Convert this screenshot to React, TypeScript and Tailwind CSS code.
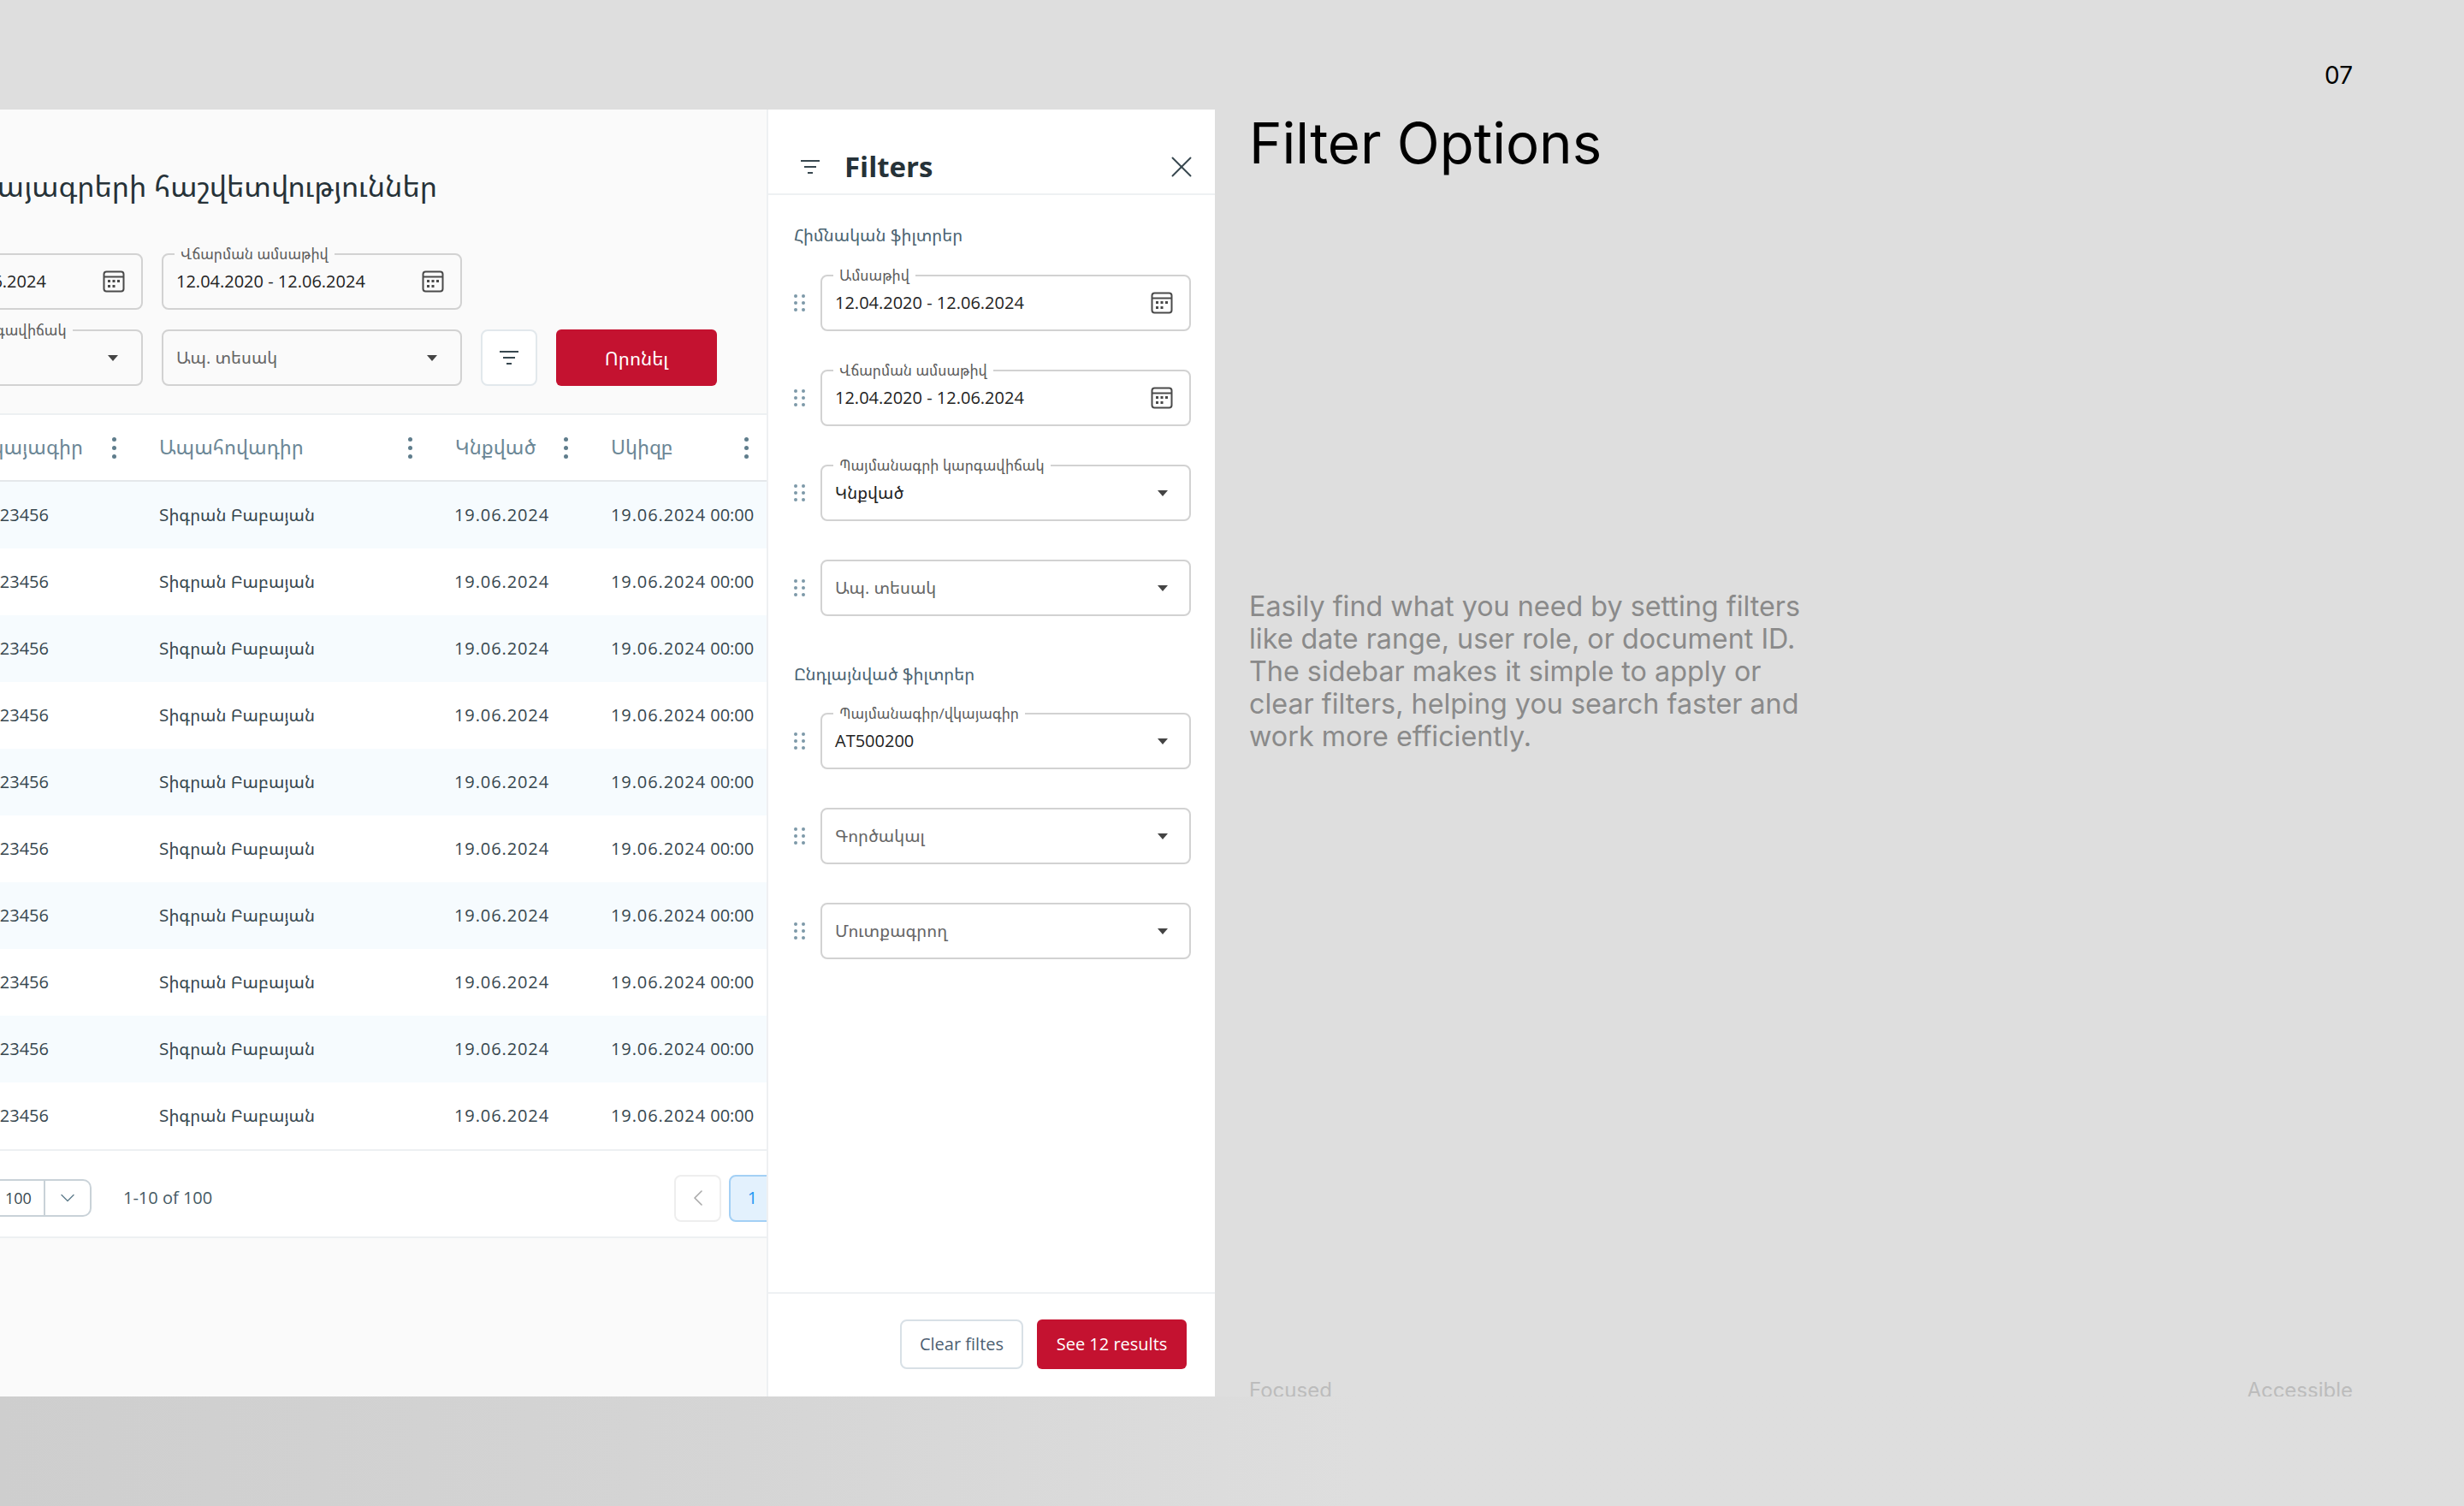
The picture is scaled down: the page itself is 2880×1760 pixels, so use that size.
import { X, ChevronDown, ChevronLeft } from "lucide-react";

function CalendarIcon() {
    return (
        <svg width="26" height="26" viewBox="0 0 26 26" fill="none" stroke="#4a4a4a" strokeWidth="2">
            <rect x="1.5" y="1.5" width="23" height="23" rx="3" />
            <path d="M1.5 7.5h23" />
            <g fill="#4a4a4a" stroke="none">
                <rect x="6" y="11" width="3" height="3" />
                <rect x="11.5" y="11" width="3" height="3" />
                <rect x="17" y="11" width="3" height="3" />
                <rect x="6" y="17" width="3" height="3" />
                <rect x="11.5" y="17" width="3" height="3" />
            </g>
        </svg>
    );
}

function FilterIcon({ color }: { color: string }) {
    return (
        <svg width="24" height="18" viewBox="0 0 24 18" fill="none" stroke={color} strokeWidth="2">
            <path d="M1 2h22M5 9h14M9 16h6" />
        </svg>
    );
}

function Caret() {
    return <div className="w-0 h-0 border-x-[6px] border-x-transparent border-t-[7px] border-t-[#444]" />;
}

function Kebab() {
    return (
        <div className="flex flex-col gap-[5px] shrink-0">
            <div className="w-[5px] h-[5px] rounded-full bg-[#5f7d8c]" />
            <div className="w-[5px] h-[5px] rounded-full bg-[#5f7d8c]" />
            <div className="w-[5px] h-[5px] rounded-full bg-[#5f7d8c]" />
        </div>
    );
}

function DragHandle() {
    return (
        <div className="grid grid-cols-2 gap-x-[6px] gap-y-[4px] w-[12px] shrink-0">
            {[0, 1, 2, 3, 4, 5].map((i) => (
                <div key={i} className="w-[4px] h-[4px] rounded-full bg-[#7d99a8]" />
            ))}
        </div>
    );
}

type FieldProps = {
    label?: string;
    value: string;
    icon: "calendar" | "caret";
    muted?: boolean;
};

// outlined box with the label sitting on the top border
function Field({ label, value, icon, muted, className }: FieldProps & { className: string }) {
    return (
        <div className={`relative h-[66px] shrink-0 rounded-[8px] border-2 border-[#d2d2d2] flex items-center justify-between pl-[15px] ${className}`}>
            {label && (
                <span className="absolute -top-[12px] left-[13px] px-[7px] bg-inherit text-[17px] leading-[22px] text-[#5c5c5c] whitespace-nowrap">
                    {label}
                </span>
            )}
            <span className={`text-[20px] ${muted ? "text-[#666]" : "text-[#222]"} whitespace-nowrap`}>{value}</span>
            {icon === "calendar" ? <CalendarIcon /> : <Caret />}
        </div>
    );
}

function SideField(props: FieldProps) {
    return (
        <div className="flex items-center gap-[19px]">
            <DragHandle />
            <Field {...props} className={`w-[433px] bg-white ${props.icon === "caret" ? "pr-[25px]" : "pr-[19px]"}`} />
        </div>
    );
}

const rows = [0, 1, 2, 3, 4, 5, 6, 7, 8, 9];

export default function App() {
    return (
        <div className="w-[2880px] h-[1760px] bg-[#dedede] flex flex-col overflow-hidden font-['Open_Sans','Noto_Sans_Armenian','DejaVu_Sans',sans-serif]">
            {/* Top strip */}
            <div className="h-[128px] flex justify-end items-center pr-[130px] pt-[48px]">
                <span className="font-['Inter',sans-serif] text-[28px] text-black">07</span>
            </div>

            <div className="h-[1504px] flex">
                {/* Main panel, cropped on the left */}
                <div className="w-[898px] bg-[#fafafa] overflow-hidden flex flex-col border-r-2 border-[#eef0f2]">
                    <div className="h-[355px] -ml-[184px] pt-[64px]">
                        <div className="w-[695px] flex justify-end">
                            <h1 className="text-[34px] leading-[50px] text-[#263238] whitespace-nowrap">Վկայագրերի հաշվետվություններ</h1>
                        </div>
                        <div className="flex gap-[22px] mt-[54px]">
                            <Field label="Ամսաթիվ" value="12.04.2020 - 12.06.2024" icon="calendar" className="w-[351px] bg-[#fafafa] pr-[19px]" />
                            <Field label="Վճարման ամսաթիվ" value="12.04.2020 - 12.06.2024" icon="calendar" className="w-[351px] bg-[#fafafa] pr-[19px]" />
                        </div>
                        <div className="flex gap-[22px] mt-[23px]">
                            <Field label="Պայմանագրի կարգավիճակ" value="Կնքված" icon="caret" className="w-[351px] bg-[#fafafa] pr-[27px]" />
                            <Field value="Ապ. տեսակ" icon="caret" className="w-[351px] bg-[#fafafa] pr-[27px]" muted />
                            <button className="w-[66px] h-[66px] shrink-0 rounded-[8px] border-2 border-[#e2e8ec] bg-white flex items-center justify-center">
                                <FilterIcon color="#37474f" />
                            </button>
                            <button className="w-[188px] h-[66px] shrink-0 rounded-[6px] bg-[#c41230] text-white text-[22px]">Որոնել</button>
                        </div>
                    </div>

                    {/* Table */}
                    <div className="bg-white border-y-2 border-[#edf0f2]">
                        <div className="h-[78px] grid grid-cols-[186px_346px_182px_182px] items-center border-b-2 border-[#e4e8eb] text-[23.5px] text-[#6b8796] whitespace-nowrap">
                            <div className="flex justify-end items-center gap-[34px] pr-[50px]">
                                <span>Վկայագիր</span>
                                <Kebab />
                            </div>
                            <div className="flex justify-between items-center pr-[50px]">
                                <span>Ապահովադիր</span>
                                <Kebab />
                            </div>
                            <div className="flex justify-between items-center pr-[50px]">
                                <span>Կնքված</span>
                                <Kebab />
                            </div>
                            <div className="flex justify-between items-center pr-[21px]">
                                <span>Սկիզբ</span>
                                <Kebab />
                            </div>
                        </div>
                        {rows.map((row) => (
                            <div
                                key={row}
                                className={`h-[78px] grid grid-cols-[186px_346px_182px_182px] items-center text-[20px] text-[#37474f] whitespace-nowrap ${row % 2 === 0 ? "bg-[#f6fbfe]" : "bg-white"}`}
                            >
                                <div className="flex justify-end pr-[129px]">123456</div>
                                <div>Տիգրան Բաբայան</div>
                                <div className="tracking-[0.9px] -ml-[1px]">19.06.2024</div>
                                <div>
                                    <span className="tracking-[0.9px]">19.06.2024</span> 00:00
                                </div>
                            </div>
                        ))}
                    </div>

                    {/* Pagination */}
                    <div className="h-[102px] pt-[10px] bg-white border-b-2 border-[#edf0f2] flex items-center overflow-hidden">
                        <div className="h-[44px] w-[108px] -ml-[1px] shrink-0 rounded-r-[10px] border-2 border-l-0 border-[#c9d2d8] flex items-center text-[18px] text-[#37474f]">
                            <span className="w-[52px] pl-[7px]">100</span>
                            <span className="h-full border-l-2 border-[#c9d2d8] flex-1 flex items-center justify-center">
                                <ChevronDown size={28} strokeWidth={1.2} color="#5f7d8c" />
                            </span>
                        </div>
                        <span className="ml-[37px] text-[20px] text-[#455a64] whitespace-nowrap">1-10 of 100</span>
                        <div className="ml-auto flex gap-[9px] -mr-[11px]">
                            <div className="w-[55px] h-[55px] rounded-[8px] border-2 border-[#eeeeee] flex items-center justify-center">
                                <ChevronLeft size={32} strokeWidth={1.2} color="#a8a8a8" />
                            </div>
                            <div className="w-[55px] h-[55px] rounded-[8px] border-2 border-[#a3d0f5] bg-[#e3f1fd] flex items-center justify-center text-[20px] text-[#2196f3]">
                                1
                            </div>
                        </div>
                    </div>
                </div>

                {/* Filters sidebar */}
                <div className="w-[522px] bg-white flex flex-col">
                    <div className="h-[100px] pt-[36px] pl-[37px] pr-[18px] border-b-2 border-[#eef1f3] flex items-start justify-between">
                        <div className="flex items-center gap-[28px] h-[62px]">
                            <FilterIcon color="#37474f" />
                            <span className="text-[33px] font-bold text-[#263238]">Filters</span>
                        </div>
                        <div className="h-[62px] flex items-center">
                            <X size={42} strokeWidth={1.1} color="#37474f" />
                        </div>
                    </div>

                    <div className="flex-1 pl-[30px] pr-[28px]">
                        <div className="mt-[33px] text-[20px] leading-[28px] text-[#4a6472]">Հիմնական ֆիլտրեր</div>
                        <div className="mt-[32px] flex flex-col gap-[45px]">
                            <SideField label="Ամսաթիվ" value="12.04.2020 - 12.06.2024" icon="calendar" />
                            <SideField label="Վճարման ամսաթիվ" value="12.04.2020 - 12.06.2024" icon="calendar" />
                            <SideField label="Պայմանագրի կարգավիճակ" value="Կնքված" icon="caret" />
                            <SideField value="Ապ. տեսակ" icon="caret" muted />
                        </div>
                        <div className="mt-[54px] text-[20px] leading-[28px] text-[#4a6472]">Ընդլայնված ֆիլտրեր</div>
                        <div className="mt-[31px] flex flex-col gap-[45px]">
                            <SideField label="Պայմանագիր/վկայագիր" value="AT500200" icon="caret" />
                            <SideField value="Գործակալ" icon="caret" muted />
                            <SideField value="Մուտքագրող" icon="caret" muted />
                        </div>
                    </div>

                    <div className="h-[122px] border-t-2 border-[#eef1f3] flex items-start justify-end gap-[16px] pt-[30px] pr-[33px]">
                        <button className="h-[58px] w-[144px] rounded-[8px] border-2 border-[#d8e0e6] bg-white text-[20px] text-[#4d6072]">Clear filtes</button>
                        <button className="h-[58px] w-[175px] rounded-[6px] bg-[#c41230] text-[20px] text-white">See 12 results</button>
                    </div>
                </div>

                {/* Copy column */}
                <div className="flex-1 flex flex-col pl-[40px] pr-[130px] font-['Inter',sans-serif]">
                    <h2 className="text-[65.3px] leading-[78px] text-black mt-[1px]">Filter Options</h2>
                    <p className="mt-[483px] w-[680px] text-[32.3px] leading-[38px] text-[#8a8a8a]">
                        Easily find what you need by setting filters like date range, user role, or document ID. The sidebar makes it simple to apply or clear filters, helping you search faster and work more efficiently.
                    </p>
                    <div className="mt-auto -mb-[9px] flex justify-between text-[24px] leading-[32px] text-[#bcbcbc]">
                        <span>Focused</span>
                        <span>Accessible</span>
                    </div>
                </div>
            </div>

            {/* Bottom strip with the soft shadow that fades out to the right */}
            <div className="h-[128px] bg-gradient-to-r from-[#cecece] via-[#d5d5d5] via-30% to-[#dedede] to-55%" />
        </div>
    );
}
